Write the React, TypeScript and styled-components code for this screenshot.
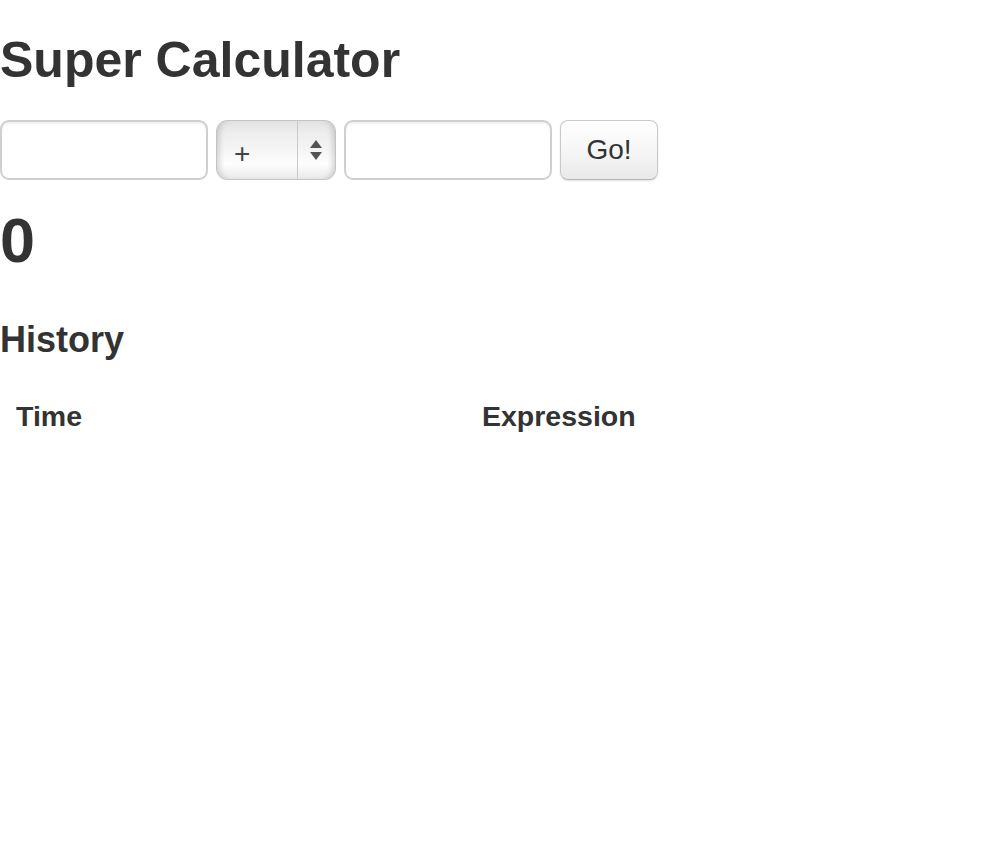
import React from "react";
import styled, { createGlobalStyle } from "styled-components";

const Global = createGlobalStyle`
  html, body { margin: 0; padding: 0; background: #fff; }
  body {
    font-family: "Liberation Sans", Arial, Helvetica, sans-serif;
    color: #333;
  }
`;

const Page = styled.div`
  display: flex;
  flex-direction: column;
`;

const Title = styled.h3`
  margin: 20px 0 20px;
  font-size: 50px;
  line-height: 80px;
  font-weight: bold;
  color: #333;
`;

const Form = styled.form`
  display: flex;
  align-items: flex-start;
  gap: 8px;
  height: 80px;
  margin: 0;
`;

const TextInput = styled.input`
  box-sizing: border-box;
  width: 208px;
  height: 60px;
  margin: 0;
  padding: 8px 12px;
  border: 2px solid #cfcfcf;
  border-radius: 9px;
  background: #fff;
  box-shadow: inset 0 2px 2px rgba(0, 0, 0, 0.06);
  font-family: inherit;
  font-size: 28px;
  color: #555;
  outline: none;
`;

const SelectWrap = styled.div`
  position: relative;
  width: 120px;
  height: 60px;
`;

const Select = styled.select`
  box-sizing: border-box;
  appearance: none;
  -webkit-appearance: none;
  width: 100%;
  height: 100%;
  margin: 0;
  padding: 6px 0 0 17px;
  border: 1px solid #c4c4c4;
  border-radius: 11px;
  background: linear-gradient(
    to bottom,
    #e2e2e2 0%,
    #ededed 20%,
    #f7f7f7 55%,
    #fdfdfd 75%,
    #e8e8e8 100%
  );
  box-shadow: inset 7px 0 6px -5px rgba(0, 0, 0, 0.18),
    inset -7px 0 6px -5px rgba(0, 0, 0, 0.18);
  font-family: inherit;
  font-size: 28px;
  color: #444;
  outline: none;
`;

const Divider = styled.span`
  position: absolute;
  top: 1px;
  bottom: 1px;
  left: 81px;
  width: 1px;
  background: #c9c9c9;
  pointer-events: none;
`;

const Arrows = styled.svg`
  position: absolute;
  left: 92px;
  top: 17px;
  pointer-events: none;
`;

const Button = styled.button`
  box-sizing: border-box;
  width: 98px;
  height: 60px;
  margin: 0;
  padding: 0;
  border: 1px solid #c9c9c9;
  border-bottom-color: #b5b5b5;
  border-radius: 8px;
  background: linear-gradient(to bottom, #ffffff 0%, #f6f6f6 50%, #e9e9e9 100%);
  box-shadow: 0 1px 2px rgba(0, 0, 0, 0.12);
  font-family: inherit;
  font-size: 28px;
  color: #333;
  cursor: pointer;
`;

const Result = styled.h2`
  margin: 0;
  font-size: 63px;
  line-height: 80px;
  font-weight: bold;
  color: #333;
`;

const SubTitle = styled.h4`
  margin: 40px 0 20px;
  font-size: 36px;
  line-height: 40px;
  font-weight: bold;
  color: #333;
`;

const Table = styled.table`
  width: 100%;
  border-collapse: collapse;
  border-spacing: 0;
`;

const Th = styled.th<{ $w?: number }>`
  padding: 16px;
  text-align: left;
  font-size: 28.5px;
  line-height: 40px;
  font-weight: bold;
  color: #333;
  width: ${(p) => (p.$w ? `${p.$w}px` : "auto")};
  box-sizing: border-box;
`;

export default function App() {
  return (
    <Page>
      <Global />
      <Title>Super Calculator</Title>
      <Form onSubmit={(e) => e.preventDefault()}>
        <TextInput type="text" />
        <SelectWrap>
          <Select defaultValue="+">
            <option value="+">+</option>
            <option value="-">-</option>
            <option value="*">*</option>
            <option value="/">/</option>
          </Select>
          <Divider />
          <Arrows width="16" height="26" viewBox="0 0 16 26">
            <polygon points="8,3 14,11 2,11" fill="#555" />
            <polygon points="2,15 14,15 8,23" fill="#555" />
          </Arrows>
        </SelectWrap>
        <TextInput type="text" />
        <Button type="submit">Go!</Button>
      </Form>
      <Result>0</Result>
      <SubTitle>History</SubTitle>
      <Table>
        <thead>
          <tr>
            <Th $w={466}>Time</Th>
            <Th>Expression</Th>
          </tr>
        </thead>
        <tbody></tbody>
      </Table>
    </Page>
  );
}
